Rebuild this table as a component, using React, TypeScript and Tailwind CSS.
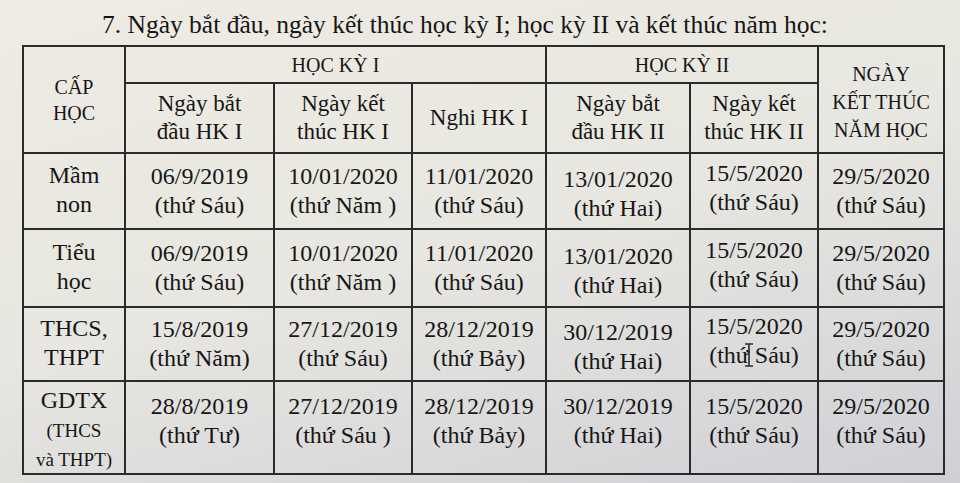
export default function App() {
  const rows = [
    {
      level: ["Mầm", "non"],
      h: "h-[76px]",
      cells: [
        ["06/9/2019", "(thứ Sáu)"],
        ["10/01/2020", "(thứ Năm )"],
        ["11/01/2020", "(thứ Sáu)"],
        ["13/01/2020", "(thứ Hai)"],
        ["15/5/2020", "(thứ Sáu)"],
        ["29/5/2020", "(thứ Sáu)"],
      ],
    },
    {
      level: ["Tiểu", "học"],
      h: "h-[78px]",
      cells: [
        ["06/9/2019", "(thứ Sáu)"],
        ["10/01/2020", "(thứ Năm )"],
        ["11/01/2020", "(thứ Sáu)"],
        ["13/01/2020", "(thứ Hai)"],
        ["15/5/2020", "(thứ Sáu)"],
        ["29/5/2020", "(thứ Sáu)"],
      ],
    },
    {
      level: ["THCS,", "THPT"],
      h: "h-[74px]",
      cells: [
        ["15/8/2019", "(thứ Năm)"],
        ["27/12/2019", "(thứ Sáu)"],
        ["28/12/2019", "(thứ Bảy)"],
        ["30/12/2019", "(thứ Hai)"],
        ["15/5/2020", "(thứ Sáu)"],
        ["29/5/2020", "(thứ Sáu)"],
      ],
    },
  ];

  const gdtx = [
    ["28/8/2019", "(thứ Tư)"],
    ["27/12/2019", "(thứ Sáu )"],
    ["28/12/2019", "(thứ Bảy)"],
    ["30/12/2019", "(thứ Hai)"],
    ["15/5/2020", "(thứ Sáu)"],
    ["29/5/2020", "(thứ Sáu)"],
  ];

  const serif = "[font-family:'Liberation_Serif',serif]";
  const cell = `border-2 border-[#2b2b2b] text-center align-middle p-0 ${serif}`;

  return (
    <div className={`w-[960px] h-[483px] overflow-hidden bg-[linear-gradient(165deg,#eeece3_0%,#e7e6e0_50%,#cfd0d6_100%)] ${serif} text-[#161616] relative`}>
      <div className="pl-[102px] pt-[10px] h-[45px] text-[25.5px] leading-[30px]">
        7. Ngày bắt đầu, ngày kết thúc học kỳ I; học kỳ II và kết thúc năm học:
      </div>
      <table className={`ml-[22px] table-fixed border-collapse w-[921px] text-[#161616] ${serif}`}>
        <colgroup>
          <col className="w-[102px]" />
          <col className="w-[149px]" />
          <col className="w-[138px]" />
          <col className="w-[134px]" />
          <col className="w-[144px]" />
          <col className="w-[128px]" />
          <col className="w-[126px]" />
        </colgroup>
        <thead>
          <tr className="h-[37px]">
            <th rowSpan={2} className={`${cell} font-normal text-[20px] leading-[26px]`}>
              CẤP
              <br />
              HỌC
            </th>
            <th colSpan={3} className={`${cell} font-normal text-[20px] leading-[26px]`}>
              HỌC KỲ I
            </th>
            <th colSpan={2} className={`${cell} font-normal text-[20px] leading-[26px]`}>
              HỌC KỲ II
            </th>
            <th rowSpan={2} className={`${cell} font-normal text-[20px] leading-[28px] pt-[4px]`}>
              NGÀY
              <br />
              KẾT THÚC
              <br />
              NĂM HỌC
            </th>
          </tr>
          <tr className="h-[70px]">
            <th className={`${cell} font-normal text-[23px] leading-[28px]`}>
              Ngày bắt
              <br />
              đầu HK I
            </th>
            <th className={`${cell} font-normal text-[23px] leading-[28px]`}>
              Ngày kết
              <br />
              thúc HK I
            </th>
            <th className={`${cell} font-normal text-[23px] leading-[28px]`}>Nghi HK I</th>
            <th className={`${cell} font-normal text-[23px] leading-[28px]`}>
              Ngày bắt
              <br />
              đầu HK II
            </th>
            <th className={`${cell} font-normal text-[23px] leading-[28px]`}>
              Ngày kết
              <br />
              thúc HK II
            </th>
          </tr>
        </thead>
        <tbody className="text-[24px] leading-[29px]">
          {rows.map((r, i) => (
            <tr key={i} className={r.h}>
              <td className={`${cell} pb-[2px]`}>
                {r.level[0]}
                <br />
                {r.level[1]}
              </td>
              {r.cells.map((c, j) => (
                <td key={j} className={`${cell} ${j === 3 ? "pt-[6px]" : ""} ${j === 4 ? "pb-[6px]" : ""}`}>
                  {c[0]}
                  <br />
                  {c[1]}
                </td>
              ))}
            </tr>
          ))}
          <tr className="h-[90px]">
            <td className={`${cell} pt-[4px]`}>
              GDTX
              <br />
              <span className="text-[19px] leading-[25px]">
                (THCS
                <br />
                và THPT)
              </span>
            </td>
            {gdtx.map((c, j) => (
              <td key={j} className={`${cell} pb-[14px]`}>
                {c[0]}
                <br />
                {c[1]}
              </td>
            ))}
          </tr>
        </tbody>
      </table>
      <svg className="absolute left-[743px] top-[343px]" width="12" height="24" viewBox="0 0 12 24">
        <path d="M2 1h8M6 1v22M2 23h8" stroke="#2b2b2b" strokeWidth="1.6" fill="none" />
      </svg>
    </div>
  );
}
